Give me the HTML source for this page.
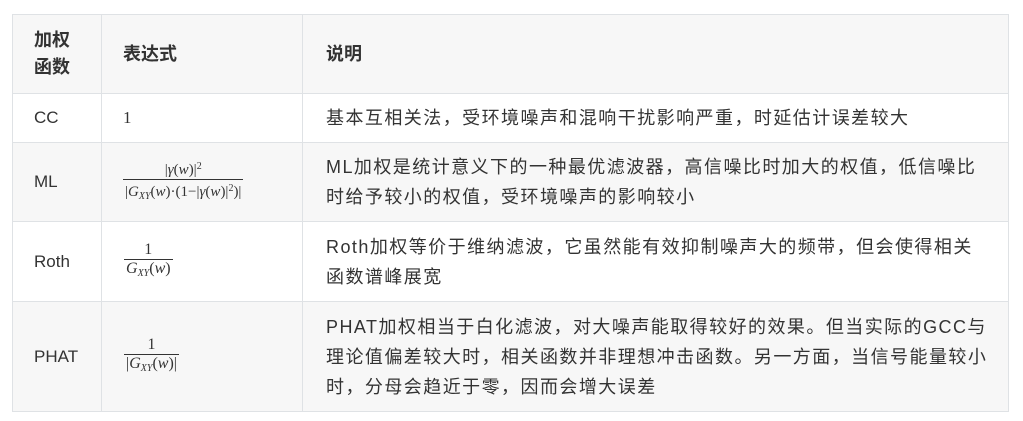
<!DOCTYPE html>
<html><head><meta charset="utf-8"><style>
body{margin:0;background:#fff;width:1023px;height:421px;overflow:hidden;font-family:"Liberation Sans","Noto Sans CJK SC",sans-serif;color:#333;}
table{position:absolute;left:12px;top:14px;border-collapse:collapse;width:997px;font-size:17px;table-layout:fixed;}
td,th{border:1px solid #dfe2e5;padding:0 0 0 21px;vertical-align:middle;text-align:left;line-height:30px;}
td.t{font-size:18px;letter-spacing:1.45px;padding-left:23px;}
th{font-weight:bold;font-size:18px;}
th.t{padding-left:23px}
.g{background:#f7f7f7}
.frac{display:inline-flex;flex-direction:column;align-items:stretch;text-align:center;font-family:"Liberation Serif",serif;font-size:16px;line-height:18px;vertical-align:middle;}
.frac .n{padding:0 2px;}
.frac .d{padding:0 2px;border-top:1px solid #333;}
i{font-style:italic}
sub{font-size:10px;vertical-align:-3px}
sup{font-size:10px;vertical-align:5px}
</style></head><body>
<table>
<colgroup><col style="width:89px"><col style="width:201px"><col></colgroup>
<tr class="g" style="height:79px"><th style="line-height:27px">加权<br>函数</th><th>表达式</th><th class="t">说明</th></tr>
<tr style="height:49px"><td>CC</td><td style="font-family:'Liberation Serif',serif;font-size:17px">1</td><td class="t">基本互相关法，受环境噪声和混响干扰影响严重，时延估计误差较大</td></tr>
<tr class="g" style="height:79px"><td>ML</td><td style="padding-left:21px"><span class="frac" style="font-size:15px"><span class="n">|<i>γ</i>(<i>w</i>)|<sup>2</sup></span><span class="d">|<i>G</i><sub><i>XY</i></sub>(<i>w</i>)·(1−|<i>γ</i>(<i>w</i>)|<sup>2</sup>)|</span></span></td><td class="t">ML加权是统计意义下的一种最优滤波器，高信噪比时加大的权值，低信噪比<br>时给予较小的权值，受环境噪声的影响较小</td></tr>
<tr style="height:80px"><td>Roth</td><td style="padding-left:22px"><span class="frac"><span class="n">1</span><span class="d"><i>G</i><sub><i>XY</i></sub>(<i>w</i>)</span></span></td><td class="t">Roth加权等价于维纳滤波，它虽然能有效抑制噪声大的频带，但会使得相关<br>函数谱峰展宽</td></tr>
<tr class="g" style="height:110px"><td>PHAT</td><td style="padding-left:22px"><span class="frac"><span class="n">1</span><span class="d">|<i>G</i><sub><i>XY</i></sub>(<i>w</i>)|</span></span></td><td class="t">PHAT加权相当于白化滤波，对大噪声能取得较好的效果。但当实际的GCC与<br>理论值偏差较大时，相关函数并非理想冲击函数。另一方面，当信号能量较小<br>时，分母会趋近于零，因而会增大误差</td></tr>
</table>
</body></html>
